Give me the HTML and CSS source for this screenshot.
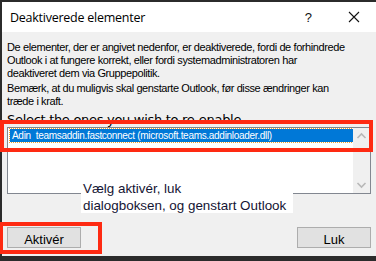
FILE: index.html
```html
<!DOCTYPE html>
<html lang="da">
<head>
<meta charset="utf-8">
<link rel="stylesheet" href="styles.css">
</head>
<body>
<div class="screen">
  <div class="dialog">
    <div class="titlebar">
      <span class="title">Deaktiverede elementer</span>
      <span class="help">?</span>
      <svg class="close" width="12" height="12" viewBox="0 0 12 12"><path d="M1 1 L11 11 M11 1 L1 11" stroke="#111" stroke-width="1.1" fill="none"/></svg>
    </div>
    <div class="body">
      <p class="para">De elementer, der er angivet nedenfor, er deaktiverede, fordi de forhindrede<br>Outlook i at fungere korrekt, eller fordi systemadministratoren har<br>deaktiveret dem via Gruppepolitik.</p>
      <p class="para">Bemærk, at du muligvis skal genstarte Outlook, før disse ændringer kan<br>træde i kraft.</p>
      <p class="select">Select the ones you wish to re-enable.</p>
      <div class="listbox">
        <div class="items">
          <div class="item selected">Adin&nbsp; teamsaddin.fastconnect (microsoft.teams.addinloader.dll)</div>
        </div>
        <div class="scrollbar">
          <svg width="17" height="17" viewBox="0 0 17 17"><path d="M4.5 10 L8.5 6 L12.5 10" stroke="#b8b8b8" stroke-width="1.6" fill="none"/></svg>
          <svg width="17" height="17" viewBox="0 0 17 17"><path d="M4.5 7 L8.5 11 L12.5 7" stroke="#b8b8b8" stroke-width="1.6" fill="none"/></svg>
        </div>
      </div>
      <div class="buttons">
        <button class="btn">Aktivér</button>
        <button class="btn">Luk</button>
      </div>
    </div>
  </div>
  <div class="note">Vælg aktivér, luk<br>dialogboksen, og genstart Outlook</div>
  <div class="mark mark-list"></div>
  <div class="mark mark-btn"></div>
</div>
</body>
</html>
```
FILE: styles.css
```css
html, body { margin: 0; padding: 0; }
body { background: #2b2b2b; }
.screen {
  position: relative;
  width: 376px;
  height: 261px;
  overflow: hidden;
  background: #2b2b2b;
  padding: 2px 0 0 2px;
  box-sizing: border-box;
}
.dialog {
  height: 254px;
  background: #f0f0f0;
  display: flex;
  flex-direction: column;
  font-family: "Liberation Sans", Arial, sans-serif;
}
.titlebar {
  height: 30px;
  background: #fff;
  display: flex;
  align-items: center;
  padding-left: 8px;
}
.title {
  font-family: "Open Sans", "Liberation Sans", sans-serif;
  font-size: 12.5px;
  color: #000;
  flex: 1;
  letter-spacing: -0.25px;
}
.help {
  font-size: 13px;
  color: #111;
  margin-right: 36px;
}
.close { margin-right: 16px; }
.body {
  flex: 1;
  padding: 9px 0 0 5px;
  display: flex;
  flex-direction: column;
  position: relative;
}
.para {
  margin: 0 0 2px;
  font-size: 11px;
  line-height: 13px;
  color: #000;
  letter-spacing: -0.4px;
  white-space: nowrap;
}
.select {
  margin: 0;
  font-family: "DejaVu Sans", sans-serif;
  font-size: 13px;
  line-height: 19px;
  height: 17px;
  overflow: hidden;
  letter-spacing: -0.3px;
  color: #000;
}
.listbox {
  width: 364px;
  height: 67px;
  box-sizing: border-box;
  border: 1px solid #828790;
  background: #fff;
  display: flex;
}
.items { flex: 1; padding: 1px 0 0 2px; }
.item {
  height: 13px;
  font-size: 10px;
  line-height: 13px;
  padding-left: 2px;
  letter-spacing: -0.3px;
  white-space: nowrap;
  overflow: hidden;
}
.selected {
  background: #0078d7;
  color: #fff;
  outline: 1px dotted #f7a22d;
}
.scrollbar {
  width: 17px;
  background: #f0f0f0;
  display: flex;
  flex-direction: column;
  justify-content: space-between;
}
.scrollbar svg { display: block; }
.buttons {
  display: flex;
  justify-content: space-between;
  width: 364px;
  margin-top: 33px;
}
.btn {
  width: 74px;
  height: 21px;
  background: #e1e1e1;
  border: 1px solid #adadad;
  font-family: "Liberation Sans", Arial, sans-serif;
  font-size: 13px;
  color: #000;
  padding: 4px 0 0;
  margin: 0;
  line-height: 15px;
}
.note {
  position: absolute;
  left: 81px;
  top: 178px;
  width: 212px;
  height: 35px;
  background: #fff;
  font-family: "Liberation Sans", Arial, sans-serif;
  font-size: 13.4px;
  line-height: 17px;
  color: #141433;
  padding: 2px 0 0 2px;
  box-sizing: border-box;
}
.mark {
  position: absolute;
  border: 4px solid #fe2a12;
  box-sizing: border-box;
}
.mark-list { left: 0; top: 120px; width: 373px; height: 32px; }
.mark-btn { left: -1px; top: 222px; width: 103px; height: 32px; }
```
